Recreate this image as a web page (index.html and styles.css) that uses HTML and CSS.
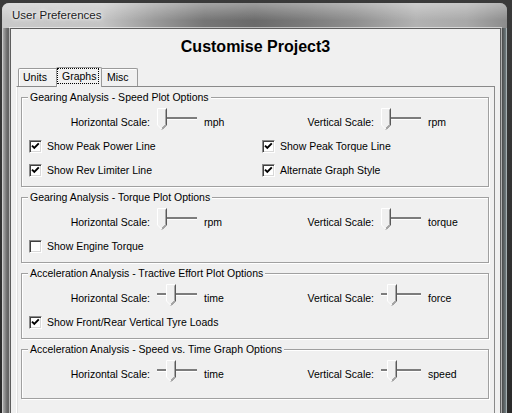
FILE: index.html
```
<!DOCTYPE html>
<html>
<head>
<meta charset="utf-8">
<title>User Preferences</title>
<link rel="stylesheet" href="styles.css">
</head>
<body>
<div class="window">
  <div class="titlebar">User Preferences</div>
  <div class="client">
    <h1 class="heading">Customise Project3</h1>
    <div class="tabs">
      <div class="tab tab-units">Units</div>
      <div class="tab tab-active"><span class="focus">Graphs</span></div>
      <div class="tab tab-misc">Misc</div>
    </div>
    <div class="panel">

      <div class="group">
        <div class="group-title">Gearing Analysis - Speed Plot Options</div>
        <div class="rows">
          <div class="scale-row">
            <div class="half">
              <span class="scale-label">Horizontal Scale:</span>
              <svg class="slider" viewBox="0 0 40 28" width="40" height="28"><rect x="0" y="11" width="40" height="2" fill="#7c7c7c"/><rect x="0" y="13" width="40" height="1" fill="#fff"/><polygon points="0.5,2.5 9.5,2.5 9.5,19 5,23.5 0.5,19" fill="#f0f0f0"/><polyline points="5,23.5 0.5,19 0.5,2.5 9.5,2.5" fill="none" stroke="#fff"/><polyline points="9.5,2.5 9.5,19 5,23.5" fill="none" stroke="#5a5a5a"/><polyline points="8.5,3.5 8.5,18.6 5,22" fill="none" stroke="#a8a8a8"/></svg>
              <span class="unit">mph</span>
            </div>
            <div class="half">
              <span class="scale-label">Vertical Scale:</span>
              <svg class="slider" viewBox="0 0 40 28" width="40" height="28"><rect x="0" y="11" width="40" height="2" fill="#7c7c7c"/><rect x="0" y="13" width="40" height="1" fill="#fff"/><polygon points="0.5,2.5 9.5,2.5 9.5,19 5,23.5 0.5,19" fill="#f0f0f0"/><polyline points="5,23.5 0.5,19 0.5,2.5 9.5,2.5" fill="none" stroke="#fff"/><polyline points="9.5,2.5 9.5,19 5,23.5" fill="none" stroke="#5a5a5a"/><polyline points="8.5,3.5 8.5,18.6 5,22" fill="none" stroke="#a8a8a8"/></svg>
              <span class="unit">rpm</span>
            </div>
          </div>
          <div class="check-row">
            <label class="check"><span class="box"><svg viewBox="0 0 11 11" width="11" height="11"><polyline points="2,4.6 4.3,7 8.8,2.4" fill="none" stroke="#000" stroke-width="1.9"/></svg></span>Show Peak Power Line</label>
            <label class="check"><span class="box"><svg viewBox="0 0 11 11" width="11" height="11"><polyline points="2,4.6 4.3,7 8.8,2.4" fill="none" stroke="#000" stroke-width="1.9"/></svg></span>Show Peak Torque Line</label>
          </div>
          <div class="check-row">
            <label class="check"><span class="box"><svg viewBox="0 0 11 11" width="11" height="11"><polyline points="2,4.6 4.3,7 8.8,2.4" fill="none" stroke="#000" stroke-width="1.9"/></svg></span>Show Rev Limiter Line</label>
            <label class="check"><span class="box"><svg viewBox="0 0 11 11" width="11" height="11"><polyline points="2,4.6 4.3,7 8.8,2.4" fill="none" stroke="#000" stroke-width="1.9"/></svg></span>Alternate Graph Style</label>
          </div>
        </div>
      </div>

      <div class="group">
        <div class="group-title">Gearing Analysis - Torque Plot Options</div>
        <div class="rows">
          <div class="scale-row">
            <div class="half">
              <span class="scale-label">Horizontal Scale:</span>
              <svg class="slider" viewBox="0 0 40 28" width="40" height="28"><rect x="0" y="11" width="40" height="2" fill="#7c7c7c"/><rect x="0" y="13" width="40" height="1" fill="#fff"/><polygon points="0.5,2.5 9.5,2.5 9.5,19 5,23.5 0.5,19" fill="#f0f0f0"/><polyline points="5,23.5 0.5,19 0.5,2.5 9.5,2.5" fill="none" stroke="#fff"/><polyline points="9.5,2.5 9.5,19 5,23.5" fill="none" stroke="#5a5a5a"/><polyline points="8.5,3.5 8.5,18.6 5,22" fill="none" stroke="#a8a8a8"/></svg>
              <span class="unit">rpm</span>
            </div>
            <div class="half">
              <span class="scale-label">Vertical Scale:</span>
              <svg class="slider" viewBox="0 0 40 28" width="40" height="28"><rect x="0" y="11" width="40" height="2" fill="#7c7c7c"/><rect x="0" y="13" width="40" height="1" fill="#fff"/><polygon points="0.5,2.5 9.5,2.5 9.5,19 5,23.5 0.5,19" fill="#f0f0f0"/><polyline points="5,23.5 0.5,19 0.5,2.5 9.5,2.5" fill="none" stroke="#fff"/><polyline points="9.5,2.5 9.5,19 5,23.5" fill="none" stroke="#5a5a5a"/><polyline points="8.5,3.5 8.5,18.6 5,22" fill="none" stroke="#a8a8a8"/></svg>
              <span class="unit">torque</span>
            </div>
          </div>
          <div class="check-row">
            <label class="check"><span class="box"></span>Show Engine Torque</label>
          </div>
        </div>
      </div>

      <div class="group">
        <div class="group-title">Acceleration Analysis - Tractive Effort Plot Options</div>
        <div class="rows">
          <div class="scale-row">
            <div class="half">
              <span class="scale-label">Horizontal Scale:</span>
              <svg class="slider" viewBox="0 0 40 28" width="40" height="28"><rect x="0" y="11" width="40" height="2" fill="#7c7c7c"/><rect x="0" y="13" width="40" height="1" fill="#fff"/><polygon points="9.5,2.5 18.5,2.5 18.5,19 14,23.5 9.5,19" fill="#f0f0f0"/><polyline points="14,23.5 9.5,19 9.5,2.5 18.5,2.5" fill="none" stroke="#fff"/><polyline points="18.5,2.5 18.5,19 14,23.5" fill="none" stroke="#5a5a5a"/><polyline points="17.5,3.5 17.5,18.6 14,22" fill="none" stroke="#a8a8a8"/></svg>
              <span class="unit">time</span>
            </div>
            <div class="half">
              <span class="scale-label">Vertical Scale:</span>
              <svg class="slider" viewBox="0 0 40 28" width="40" height="28"><rect x="0" y="11" width="40" height="2" fill="#7c7c7c"/><rect x="0" y="13" width="40" height="1" fill="#fff"/><polygon points="6.5,2.5 15.5,2.5 15.5,19 11,23.5 6.5,19" fill="#f0f0f0"/><polyline points="11,23.5 6.5,19 6.5,2.5 15.5,2.5" fill="none" stroke="#fff"/><polyline points="15.5,2.5 15.5,19 11,23.5" fill="none" stroke="#5a5a5a"/><polyline points="14.5,3.5 14.5,18.6 11,22" fill="none" stroke="#a8a8a8"/></svg>
              <span class="unit">force</span>
            </div>
          </div>
          <div class="check-row">
            <label class="check"><span class="box"><svg viewBox="0 0 11 11" width="11" height="11"><polyline points="2,4.6 4.3,7 8.8,2.4" fill="none" stroke="#000" stroke-width="1.9"/></svg></span>Show Front/Rear Vertical Tyre Loads</label>
          </div>
        </div>
      </div>

      <div class="group group-last">
        <div class="group-title">Acceleration Analysis - Speed vs. Time Graph Options</div>
        <div class="rows">
          <div class="scale-row">
            <div class="half">
              <span class="scale-label">Horizontal Scale:</span>
              <svg class="slider" viewBox="0 0 40 28" width="40" height="28"><rect x="0" y="11" width="40" height="2" fill="#7c7c7c"/><rect x="0" y="13" width="40" height="1" fill="#fff"/><polygon points="9.5,2.5 18.5,2.5 18.5,19 14,23.5 9.5,19" fill="#f0f0f0"/><polyline points="14,23.5 9.5,19 9.5,2.5 18.5,2.5" fill="none" stroke="#fff"/><polyline points="18.5,2.5 18.5,19 14,23.5" fill="none" stroke="#5a5a5a"/><polyline points="17.5,3.5 17.5,18.6 14,22" fill="none" stroke="#a8a8a8"/></svg>
              <span class="unit">time</span>
            </div>
            <div class="half">
              <span class="scale-label">Vertical Scale:</span>
              <svg class="slider" viewBox="0 0 40 28" width="40" height="28"><rect x="0" y="11" width="40" height="2" fill="#7c7c7c"/><rect x="0" y="13" width="40" height="1" fill="#fff"/><polygon points="6.5,2.5 15.5,2.5 15.5,19 11,23.5 6.5,19" fill="#f0f0f0"/><polyline points="11,23.5 6.5,19 6.5,2.5 15.5,2.5" fill="none" stroke="#fff"/><polyline points="15.5,2.5 15.5,19 11,23.5" fill="none" stroke="#5a5a5a"/><polyline points="14.5,3.5 14.5,18.6 11,22" fill="none" stroke="#a8a8a8"/></svg>
              <span class="unit">speed</span>
            </div>
          </div>
        </div>
      </div>

    </div>
  </div>
</div>
</body>
</html>
```
FILE: styles.css
```
html, body {
  margin: 0;
  padding: 0;
}
body {
  width: 512px;
  height: 413px;
  overflow: hidden;
  background: linear-gradient(to bottom, #3a3a3a, #2a2a2a);
  font-family: "Liberation Sans", Arial, sans-serif;
  font-size: 10.5px;
  color: #000;
}
.window {
  margin: 3px 5px 0 2px;
  height: 420px;
  padding: 0 6px 0 8px;
  border-radius: 7px 7px 0 0;
  background: linear-gradient(to right, #b9b9b9 0%, #6a6a6a 1%, #5c5c5c 1.6%, #8c8c8c 2.2%, #9a9a9a 50%, #8a8a8a 98%, #4a4a4a 99%, #7a8a8e 100%);
  box-shadow: inset 0 0 0 1px rgba(255,255,255,0.35);
}
.titlebar {
  height: 25px;
  line-height: 25px;
  margin: 0 -6px 0 -8px;
  padding-left: 10px;
  border-radius: 7px 7px 0 0;
  font-size: 11.5px;
  color: #1c1c1c;
  text-shadow: 0 0 6px #fff, 0 0 3px #fff;
  background:
    linear-gradient(to bottom, rgba(255,255,255,0.35), rgba(255,255,255,0) 70%),
    linear-gradient(to right, #c9c9c9 0%, #c4c4c4 20%, #9a9a9a 30%, #767676 40%, #6a6a6a 50%, #7a7a7a 60%, #8f8f8f 70%, #b2b2b2 82%, #a8a8a8 92%, #8c8c8c 100%);
}
.client {
  background: #f0f0f0;
  border: 1px solid #5e5e5e;
  box-shadow: 0 0 0 1px rgba(255,255,255,0.55);
  height: 400px;
}
.heading {
  margin: 0;
  padding-top: 8px;
  height: 20px;
  line-height: 20px;
  font-size: 16px;
  font-weight: bold;
  text-align: center;
}
.tabs {
  display: flex;
  align-items: flex-end;
  margin: 9px 0 0 7px;
  height: 20px;
  position: relative;
  z-index: 1;
}
.tab {
  height: 17px;
  line-height: 17px;
  border: 1px solid #9a9a9a;
  border-bottom: none;
  border-radius: 2px 2px 0 0;
  box-shadow: inset 1px 1px 0 #fff;
  background: #f0f0f0;
}
.tab-units {
  width: 34px;
  padding-left: 4px;
}
.tab-active {
  height: 20px;
  margin-left: -2px;
  margin-bottom: -1px;
  padding: 1px 2px 0 1px;
  width: 43px;
  box-sizing: border-box;
  line-height: 13px;
  position: relative;
  z-index: 2;
  width: 46px;
}
.focus {
  display: inline-block;
  outline: 1px dotted #000;
  outline-offset: 0;
  padding: 1px 2px 0 4px;
  line-height: 13px;
}
.tab-misc {
  width: 30px;
  margin-left: -2px;
  padding-left: 6px;
}
.panel {
  margin: 0 5px;
  border-top: 1px solid #898989;
  border-right: 1px solid #898989;
  border-left: 1px solid #fff;
  box-shadow: inset 1px 0 0 #e0e0e0;
  padding: 10px 5px 20px 4px;
}
.group {
  border: 1px solid #a0a0a0;
  box-shadow: inset 1px 1px 0 #fff, 1px 1px 0 #fff;
  padding-bottom: 4px;
  margin-bottom: 10px;
}
.group-last {
  padding-bottom: 12px;
}
.group-title {
  display: table;
  margin: -7px 0 0 6px;
  padding: 0 2px;
  height: 13px;
  line-height: 13px;
  background: #f0f0f0;
}
.rows {
  padding-top: 6px;
}
.scale-row {
  display: grid;
  grid-template-columns: 224px 224px;
  height: 24px;
}
.half {
  display: flex;
  align-items: center;
  height: 24px;
}
.scale-label {
  width: 128px;
  text-align: right;
}
.slider {
  display: block;
  align-self: flex-start;
  margin: -4px 0 0 7px;
}
.unit {
  margin-left: 7px;
}
.check-row {
  display: grid;
  grid-template-columns: 233px auto;
  padding-left: 7px;
  height: 24px;
}
.check {
  display: flex;
  align-items: center;
  gap: 5px;
  height: 24px;
}
.box {
  box-sizing: border-box;
  width: 13px;
  height: 13px;
  border: 1px solid;
  border-color: #8a8a8a #fff #fff #8a8a8a;
  box-shadow: inset 1px 1px 0 #404040, inset -1px -1px 0 #d8d8d8;
  background: #fff;
  display: flex;
  align-items: center;
  justify-content: center;
}
.box svg {
  display: block;
}
```
